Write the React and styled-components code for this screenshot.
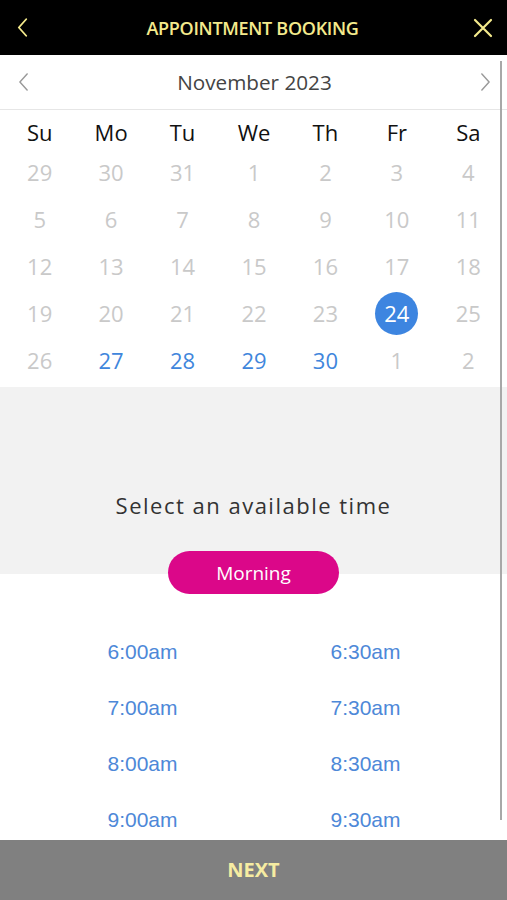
import React from 'react'
import styled, { createGlobalStyle } from 'styled-components'

const GlobalStyle = createGlobalStyle`
  html, body { margin: 0; padding: 0; background: #fff; }
  body { font-family: "Open Sans", "Noto Sans", sans-serif; }
`

const Page = styled.div`
  width: 507px;
  height: 900px;
  display: flex;
  flex-direction: column;
  overflow: hidden;
`

const Header = styled.header`
  height: 55px;
  background: #000;
  display: flex;
  align-items: center;
  justify-content: space-between;
  padding: 0 12px 0 10px;
  box-sizing: border-box;
`

const HeaderTitle = styled.h1`
  margin: 0;
  font-size: 18px;
  font-weight: 600;
  color: #f4ea8c;
  letter-spacing: -0.3px;
`

const IconButton = styled.div`
  width: 24px;
  height: 24px;
  display: flex;
  align-items: center;
  justify-content: center;
`

const Body = styled.div`
  flex: 1;
  position: relative;
  min-height: 0;
  overflow: hidden;
`

const ScrollThumb = styled.div`
  position: absolute;
  top: 6px;
  left: 500px;
  width: 2px;
  height: 759px;
  background: #a8a8a8;
`

const MonthBar = styled.div`
  height: 55px;
  display: flex;
  align-items: center;
  justify-content: space-between;
  padding: 0 16px 0 18px;
  border-bottom: 1px solid #e6e6e6;
  box-sizing: border-box;
`

const MonthTitle = styled.div`
  font-size: 20.7px;
  color: #444;
`

const Grid = styled.div`
  display: grid;
  grid-template-columns: repeat(7, 1fr);
  grid-auto-rows: 47px;
  grid-template-rows: 39px;
  padding: 0 3px 3px 4px;
`

const WeekDay = styled.div`
  display: flex;
  align-items: center;
  justify-content: center;
  padding-top: 4px;
  font-size: 22px;
  color: #111;
`

const DayCell = styled.div`
  display: flex;
  align-items: center;
  justify-content: center;
  padding-bottom: 1px;
`

const DayNum = styled.div`
  width: 43px;
  height: 43px;
  border-radius: 50%;
  display: flex;
  align-items: center;
  justify-content: center;
  font-size: 22px;
  color: ${p => (p.$selected ? '#fff' : p.$available ? '#3f86dc' : '#c9c9c9')};
  background: ${p => (p.$selected ? '#3d85e0' : 'transparent')};
`

const TimeSection = styled.section`
  background: linear-gradient(#f2f2f2 0, #f2f2f2 187px, #fff 187px);
  padding-top: 104px;
  display: flex;
  flex-direction: column;
  align-items: center;
`

const SelectText = styled.div`
  font-size: 22px;
  line-height: 28px;
  letter-spacing: 1.5px;
  color: #333;
`

const PeriodPill = styled.div`
  margin-top: 32px;
  width: 171px;
  height: 43px;
  border-radius: 22px;
  background: #db0789;
  color: #fff;
  font-size: 19px;
  display: flex;
  align-items: center;
  justify-content: center;
`

const Times = styled.div`
  align-self: stretch;
  margin-top: 30px;
  padding: 0 30px 0 31px;
  display: grid;
  grid-template-columns: 1fr 1fr;
  grid-auto-rows: 56px;
`

const TimeSlot = styled.div`
  display: flex;
  align-items: center;
  justify-content: center;
  font-family: "Liberation Sans", Arial, sans-serif;
  font-size: 21px;
  color: #4d88d8;
`

const NextBar = styled.footer`
  height: 60px;
  background: #808080;
  display: flex;
  align-items: center;
  justify-content: center;
  padding-bottom: 2px;
  box-sizing: border-box;
  font-size: 20px;
  font-weight: 700;
  color: #f6eca2;
`

const Chevron = ({ dir = 'left', color, w = 12, h = 20, sw = 2 }) => (
  <svg width={w} height={h} viewBox="0 0 12 20" fill="none">
    <path
      d={dir === 'left' ? 'M10 1 L2 10 L10 19' : 'M2 1 L10 10 L2 19'}
      stroke={color}
      strokeWidth={sw}
      strokeLinecap="round"
      strokeLinejoin="round"
    />
  </svg>
)

const CloseIcon = () => (
  <svg width="20" height="20" viewBox="0 0 20 20" fill="none">
    <path d="M2 2 L18 18 M18 2 L2 18" stroke="#f4ea8c" strokeWidth="2.2" strokeLinecap="round" />
  </svg>
)

const weekDays = ['Su', 'Mo', 'Tu', 'We', 'Th', 'Fr', 'Sa']
const days = [
  29, 30, 31, 1, 2, 3, 4,
  5, 6, 7, 8, 9, 10, 11,
  12, 13, 14, 15, 16, 17, 18,
  19, 20, 21, 22, 23, 24, 25,
  26, 27, 28, 29, 30, 1, 2,
]
const times = ['6:00am', '6:30am', '7:00am', '7:30am', '8:00am', '8:30am', '9:00am', '9:30am']

export default function App() {
  return (
    <Page>
      <GlobalStyle />
      <Header>
        <IconButton><Chevron color="#f4ea8c" w={11} h={19} /></IconButton>
        <HeaderTitle>APPOINTMENT BOOKING</HeaderTitle>
        <IconButton><CloseIcon /></IconButton>
      </Header>
      <Body>
        <MonthBar>
          <Chevron color="#9a9a9a" w={11} h={18} sw={1.6} />
          <MonthTitle>November 2023</MonthTitle>
          <Chevron dir="right" color="#9a9a9a" w={11} h={18} sw={1.6} />
        </MonthBar>
        <Grid>
          {weekDays.map(d => <WeekDay key={d}>{d}</WeekDay>)}
          {days.map((d, i) => (
            <DayCell key={i}>
              <DayNum $selected={i === 26} $available={i >= 29 && i <= 32}>{d}</DayNum>
            </DayCell>
          ))}
        </Grid>
        <TimeSection>
          <SelectText>Select an available time</SelectText>
          <PeriodPill>Morning</PeriodPill>
          <Times>
            {times.map(t => <TimeSlot key={t}>{t}</TimeSlot>)}
          </Times>
        </TimeSection>
        <ScrollThumb />
      </Body>
      <NextBar>NEXT</NextBar>
    </Page>
  )
}
